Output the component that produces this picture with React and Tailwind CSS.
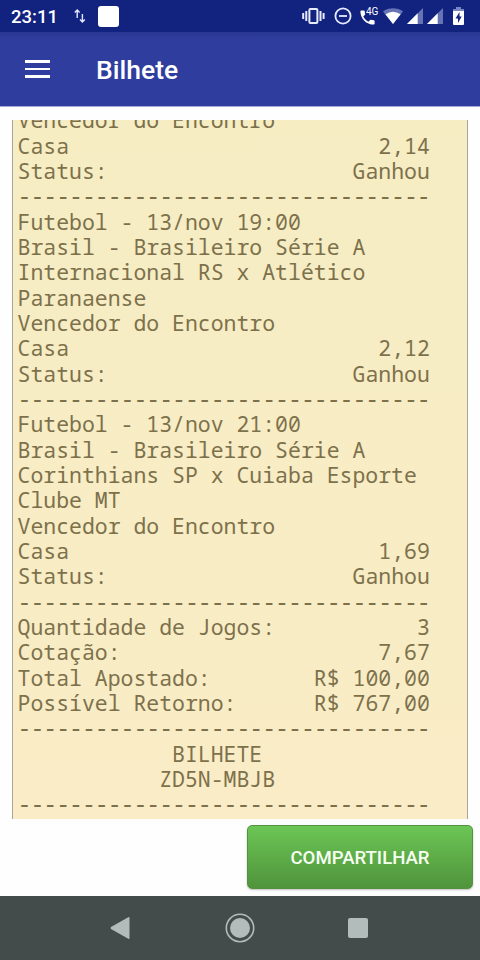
import React from "react";

const DASHES = "--------------------------------";

const LINES = [
  ["Vencedor do Encontro"],
  ["Casa", "2,14"],
  ["Status:", "Ganhou"],
  [DASHES],
  ["Futebol - 13/nov 19:00"],
  ["Brasil - Brasileiro Série A"],
  ["Internacional RS x Atlético"],
  ["Paranaense"],
  ["Vencedor do Encontro"],
  ["Casa", "2,12"],
  ["Status:", "Ganhou"],
  [DASHES],
  ["Futebol - 13/nov 21:00"],
  ["Brasil - Brasileiro Série A"],
  ["Corinthians SP x Cuiaba Esporte"],
  ["Clube MT"],
  ["Vencedor do Encontro"],
  ["Casa", "1,69"],
  ["Status:", "Ganhou"],
  [DASHES],
  ["Quantidade de Jogos:", "3"],
  ["Cotação:", "7,67"],
  ["Total Apostado:", "R$ 100,00"],
  ["Possível Retorno:", "R$ 767,00"],
  [DASHES],
  ["            BILHETE"],
  ["           ZD5N-MBJB"],
  [DASHES],
];

function Signal() {
  return (
    <svg width="16" height="16" viewBox="0 0 16 16">
      <path d="M16 0V16H0Z" fill="#6673b5" />
      <path d="M10.700 5.300V16H0Z" fill="#fff" />
    </svg>
  );
}

function StatusBar() {
  return (
    <div className="flex h-8 shrink-0 items-center bg-[#12227f] pl-[11px] text-white">
      <span className="w-[63px] pt-px text-[18.5px] leading-8 font-medium">23:11</span>
      <svg className="-mt-px" width="12" height="16" viewBox="0 0 12 16" fill="none" stroke="#e4e8ff" strokeWidth="1.4">
        <path d="M3.2 10V2M.8 4.4L3.2 2l2.4 2.4M8.4 6v8M6 11.6L8.4 14l2.4-2.4" />
      </svg>
      <div className="ml-[12px] size-[21px] rounded-[3px] bg-white" />
      <div className="ml-auto flex h-8 items-center pr-[16px]">
        <svg width="23" height="18" viewBox="0 0 23 18" fill="none" stroke="#e8ebff" strokeWidth="2">
          <rect x="7.4" y="1.9" width="8" height="14.2" rx="1" />
          <path d="M4.3 4v10M1.2 6v6M18.5 4v10M21.6 6v6" />
        </svg>
        <svg className="ml-[9px] mr-px" width="18" height="18" viewBox="0 0 18 18" fill="none" stroke="#e8ebff" strokeWidth="1.8">
          <circle cx="9" cy="9" r="7.6" />
          <path d="M5 9h8" />
        </svg>
        <div className="relative ml-[7px] h-[18px] w-[19px]">
          <svg className="mt-[3px]" width="15" height="15" viewBox="2.5 2.5 19 19" fill="#fff">
            <path d="M6.62 10.79c1.44 2.83 3.76 5.14 6.59 6.59l2.2-2.2c.27-.27.67-.36 1.02-.24 1.12.37 2.33.57 3.57.57.55 0 1 .45 1 1V20c0 .55-.45 1-1 1C10.61 21 3 13.39 3 4c0-.55.45-1 1-1h3.5c.55 0 1 .45 1 1 0 1.25.2 2.45.57 3.57.11.35.03.74-.25 1.02l-2.2 2.2z" />
          </svg>
          <span className="absolute top-0 left-[6px] text-[10px] leading-[10px]">4G</span>
        </div>
        <svg className="ml-[4px]" width="20" height="16" viewBox="0 0 20 16">
          <path d="M0 3.5C5.5-.9 14.500-.9 20 3.500L10 16Z" fill="#6673b5" />
          <path d="M2.400 6.200Q10 1.200 17.600 6.200L10 16Z" fill="#fff" />
        </svg>
        <div className="ml-[4px] flex gap-1">
          <Signal />
          <Signal />
        </div>
        <svg className="ml-[10px]" width="11" height="18" viewBox="0 0 11 18">
          <path d="M3 0h5v2h3v2H0V2h3Z" fill="#7985c0" />
          <path d="M0 4h11v13q0 1-1 1H1q-1 0-1-1Z" fill="#fff" />
          <path d="M6.500 5L2.500 11.500H5V16L8.700 9.500H6.500Z" fill="#12227f" />
        </svg>
      </div>
    </div>
  );
}

export default function App() {
  return (
    <div className="flex h-[960px] w-[480px] flex-col overflow-hidden bg-[#fefefe] font-['Roboto',sans-serif]">
      <StatusBar />
      <header className="flex h-[74px] shrink-0 items-center bg-[#2f3d9d] bg-linear-to-b from-[#293693] to-[#2f3d9e] to-10% pl-[25px] text-white">
        <div className="flex w-[71px] flex-col gap-[5px]">
          <div className="h-[2.500px] w-[25px] bg-white" />
          <div className="h-[2.500px] w-[25px] bg-white" />
          <div className="h-[2.500px] w-[25px] bg-white" />
        </div>
        <h1 className="pt-[2px] text-[26.500px] leading-8 font-medium">Bilhete</h1>
      </header>
      <div className="h-px shrink-0 bg-[#a5abd6]" />

      <main className="mt-[13px] ml-3 h-[698.500px] w-[456px] shrink-0 overflow-hidden border-x border-[#a9a69c] bg-linear-to-b from-[#f6edc3] to-[#f9ecc6] pl-[4.500px] font-['Droid_Sans_Mono','Noto_Sans_Mono','DejaVu_Sans_Mono',monospace] text-[21.470px] leading-[25.340px] text-[#7d714c]">
        <div className="-mt-[12.600px] w-[412.300px]">
          {LINES.map(([left, right], i) => (
            <div
              key={i}
              className={
                left === DASHES
                  ? "h-[25.340px] pl-[0.500px] leading-[25.340px] font-medium whitespace-pre"
                  : "flex h-[25.340px] justify-between whitespace-pre"
              }
            >
              <span>{left}</span>
              {right && <span>{right}</span>}
            </div>
          ))}
        </div>
      </main>

      <div className="flex flex-1 items-start justify-end pt-[6.500px] pr-[7px]">
        <button className="h-[64px] w-[226px] rounded-[5px] border border-[#55923f] bg-linear-to-b from-[#6cc655] to-[#50943c] pt-[3px] text-[18.600px] font-medium text-[#f7fff3] shadow-[0_1px_2px_rgba(0,0,0,0.25)]">
          COMPARTILHAR
        </button>
      </div>

      <nav className="flex h-16 shrink-0 items-center justify-center bg-[#434c4b] pr-[2px]">
        <svg width="20" height="24" viewBox="0 0 20 24" fill="#b2bcbb">
          <path d="M18.300 1.200Q19.500.6 19.500 2V22Q19.500 23.400 18.300 22.800L1 13Q0 12 1 11Z" />
        </svg>
        <svg className="mr-[93px] ml-[95px]" width="30" height="30" viewBox="0 0 30 30">
          <circle cx="15" cy="15" r="13.700" fill="none" stroke="#b2bcbb" strokeWidth="1.600" />
          <circle cx="15" cy="15" r="10" fill="#b2bcbb" />
        </svg>
        <div className="size-5 rounded-[2px] bg-[#b2bcbb]" />
      </nav>
    </div>
  );
}
